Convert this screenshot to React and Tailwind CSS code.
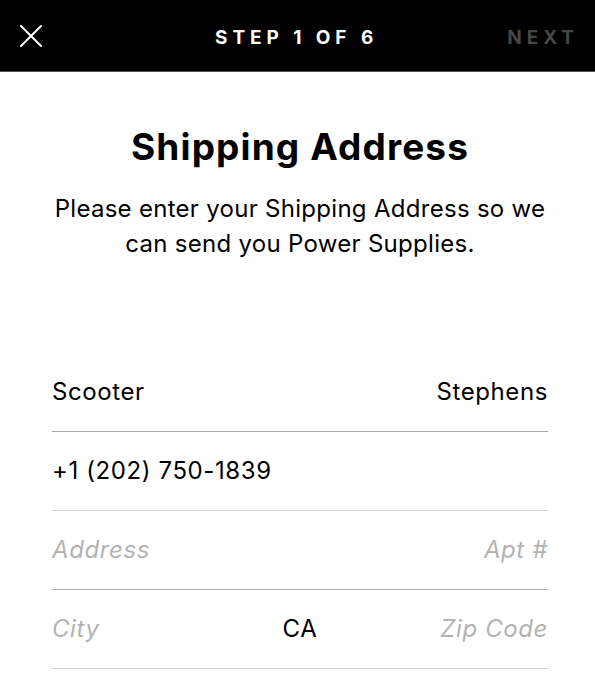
const font = { fontFamily: 'Inter, "Noto Sans", sans-serif' };

function Row({ children, line = 'border-[#aaaaaa]' }) {
  return (
    <div className={`flex h-[79px] items-center justify-between border-b ${line} text-[24px] tracking-[0.025em] text-black`}>
      {children}
    </div>
  );
}

export default function App() {
  return (
    <div className="min-h-[688px] w-full bg-white" style={font}>
      <header className="flex h-[72px] items-center justify-between border-b border-[#555] bg-black pl-[20px] pr-[16px]">
        <svg width="22" height="22" viewBox="0 0 22 22" className="text-white">
          <path d="M1 1 L21 21 M21 1 L1 21" stroke="currentColor" strokeWidth="2" strokeLinecap="round" />
        </svg>
        <div className="ml-[44px] mt-[5px] text-[19px] font-bold tracking-[0.26em] text-white">STEP 1 OF 6</div>
        <div className="mt-[5px] text-[19px] font-bold tracking-[0.26em] text-[#474747]">NEXT</div>
      </header>

      <div className="pl-[52px] pr-[47px]">
        <h1 className="mt-[53px] text-center text-[37px] font-bold leading-[44px] tracking-[0.03em] text-black">
          Shipping Address
        </h1>
        <p className="mt-[22px] text-center text-[24px] leading-[35px] tracking-[0.012em] text-black">
          Please enter your Shipping Address so we can send you Power Supplies.
        </p>

        <form className="mt-[92px]">
          <Row>
            <span>Scooter</span>
            <span>Stephens</span>
          </Row>
          <Row line="border-[#d4d4d4]">
            <span>+1 (202) 750-1839</span>
          </Row>
          <Row>
            <span className="italic text-[#b3b3b3]">Address</span>
            <span className="italic text-[#b3b3b3]">Apt #</span>
          </Row>
          <Row line="border-[#d4d4d4]">
            <span className="w-[160px] italic text-[#b3b3b3]">City</span>
            <span>CA</span>
            <span className="w-[160px] text-right italic text-[#b3b3b3]">Zip Code</span>
          </Row>
        </form>
      </div>
    </div>
  );
}
